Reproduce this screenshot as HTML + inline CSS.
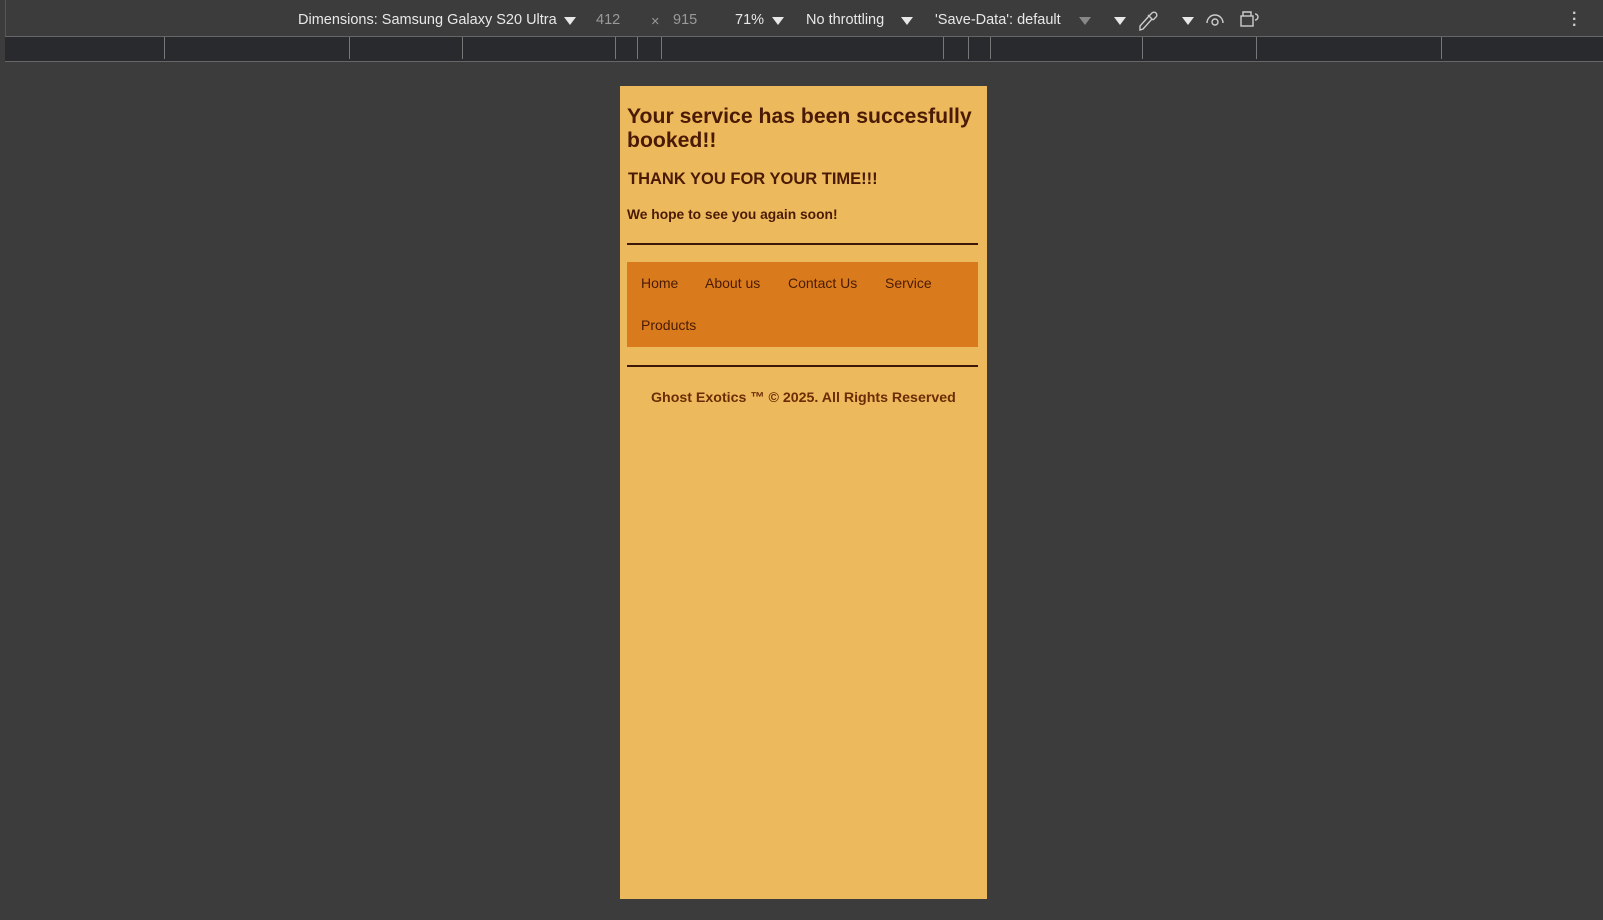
<!DOCTYPE html>
<html><head><meta charset="utf-8"><style>
*{margin:0;padding:0;box-sizing:border-box}
body{width:1603px;height:920px;background:#3c3c3c;position:relative;overflow:hidden;font-family:"Liberation Sans",sans-serif}
.tb{position:absolute;left:5px;top:0;right:0;height:37px;background:#3c3c3c;border-left:1px solid #555}
.t{position:absolute;top:12px;font-size:14.5px;color:#e8e8e8;white-space:nowrap}
.g{color:#9a9a9a}
.tri{position:absolute;top:17px;width:0;height:0;border-left:6px solid transparent;border-right:6px solid transparent;border-top:8px solid #e8e8e8}
.ruler{position:absolute;left:5px;top:36px;right:0;height:26px;background:#292a2d;border-top:1px solid #666;border-bottom:1px solid #666}
.tick{position:absolute;top:0;width:1px;height:22px;background:#777}
.card{position:absolute;left:620px;top:86px;width:367px;height:813px;background:#ecba5c;color:#4a1a05}
.abs{position:absolute;white-space:nowrap}
</style></head><body>
<div class="tb"></div>
<div class="t" style="left:298px">Dimensions: Samsung Galaxy S20 Ultra</div>
<div class="tri" style="left:564px"></div>
<div class="t g" style="left:596px">412</div>
<div class="t g" style="left:651px;top:14px">×</div>
<div class="t g" style="left:673px">915</div>
<div class="t" style="left:735px">71%</div>
<div class="tri" style="left:772px"></div>
<div class="t" style="left:806px">No throttling</div>
<div class="tri" style="left:901px"></div>
<div class="t" style="left:935px">'Save-Data': default</div>
<div class="tri" style="left:1079px;border-top-color:#888"></div>
<div class="tri" style="left:1114px"></div>
<svg class="abs" style="left:1138px;top:8px" width="22" height="24" viewBox="0 0 22 24" fill="none" stroke="#ccc" stroke-width="1.4"><path d="M2 22l3-1 9-10-3-3-9 10z M11 8l3-3a2.5 2.5 0 014 4l-3 3 M10 7l5 5"/></svg>
<div class="tri" style="left:1182px"></div>
<svg class="abs" style="left:1205px;top:11px" width="20" height="16" viewBox="0 0 20 16" fill="none" stroke="#ccc" stroke-width="1.4"><path d="M2 12a8 8 0 0116 0"/><circle cx="10" cy="11" r="3"/></svg>
<svg class="abs" style="left:1239px;top:10px" width="22" height="18" viewBox="0 0 22 18" fill="none" stroke="#ccc" stroke-width="1.4"><rect x="2" y="6" width="12" height="10"/><path d="M4 6V2h8v4 M16 4a3 3 0 010 6"/></svg>
<div class="abs" style="left:1572px;top:11px;color:#ccc;font-size:16px;line-height:6px;font-weight:bold">·<br>·<br>·</div>
<div class="ruler">
<div class="tick" style="left:159px"></div><div class="tick" style="left:344px"></div><div class="tick" style="left:457px"></div><div class="tick" style="left:610px"></div><div class="tick" style="left:632px"></div><div class="tick" style="left:656px"></div><div class="tick" style="left:938px"></div><div class="tick" style="left:963px"></div><div class="tick" style="left:985px"></div><div class="tick" style="left:1137px"></div><div class="tick" style="left:1251px"></div><div class="tick" style="left:1436px"></div>
</div>
<div class="card">
<div class="abs" style="left:7px;top:19px;font-size:21.2px;font-weight:bold;line-height:24px">Your service has been succesfully<br>booked!!</div>
<div class="abs" style="left:8px;top:84px;font-size:16.5px;font-weight:bold">THANK YOU FOR YOUR TIME!!!</div>
<div class="abs" style="left:7px;top:121px;font-size:13.8px;font-weight:bold">We hope to see you again soon!</div>
<div class="abs" style="left:7px;top:157px;width:351px;height:2px;background:#3d1707"></div>
<div class="abs" style="left:7px;top:176px;width:351px;height:85px;background:#d97b1c"></div>
<div class="abs" style="left:21px;top:189px;font-size:14px">Home</div>
<div class="abs" style="left:85px;top:189px;font-size:14px">About us</div>
<div class="abs" style="left:168px;top:189px;font-size:14px">Contact Us</div>
<div class="abs" style="left:265px;top:189px;font-size:14px">Service</div>
<div class="abs" style="left:21px;top:231px;font-size:14px">Products</div>
<div class="abs" style="left:7px;top:279px;width:351px;height:2px;background:#3d1707"></div>
<div class="abs" style="left:31px;top:304px;width:303px;text-align:center;font-size:14.2px;font-weight:bold;color:#6b2c05">Ghost Exotics ™ © 2025. All Rights Reserved</div>
</div>
</body></html>
